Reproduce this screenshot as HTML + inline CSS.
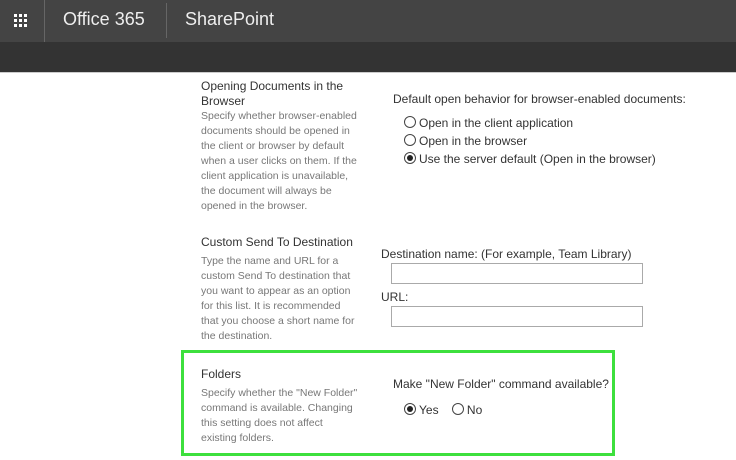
<!DOCTYPE html><html><head><style>
body{margin:0;width:736px;height:460px;overflow:hidden;background:#fff;font-family:"Liberation Sans",sans-serif;position:relative}
.a{position:absolute;white-space:nowrap}
.t{font-size:12px;color:#333}
.d{font-size:10.5px;color:#777;line-height:15px}
.r{font-size:12px;color:#333}
.rad{display:inline-block;width:10px;height:10px;border:1px solid #444;border-radius:50%;vertical-align:-1px;margin-right:3px;position:relative}
.on::after{content:"";position:absolute;left:2px;top:2px;width:6px;height:6px;border-radius:50%;background:#222}
.in{position:absolute;border:1px solid #aaa;height:19px;width:250px;background:#fff}
</style></head><body>
<div class="a" style="left:0;top:0;width:736px;height:42px;background:#444"></div>
<div class="a" style="left:0;top:42px;width:736px;height:30px;background:#333"></div>
<div class="a" style="left:0;top:72px;width:736px;height:1px;background:#ccc"></div>
<svg class="a" style="left:14px;top:14px" width="16" height="14"><g fill="#fff"><rect x="0" y="0" width="3" height="3"/><rect x="5" y="0" width="3" height="3"/><rect x="10" y="0" width="3" height="3"/><rect x="0" y="5" width="3" height="3"/><rect x="5" y="5" width="3" height="3"/><rect x="10" y="5" width="3" height="3"/><rect x="0" y="10" width="3" height="3"/><rect x="5" y="10" width="3" height="3"/><rect x="10" y="10" width="3" height="3"/></g></svg>
<div class="a" style="left:44px;top:0;width:1px;height:42px;background:#666"></div>
<div class="a" style="left:63px;top:9px;font-size:18px;color:#eee">Office 365</div>
<div class="a" style="left:166px;top:3px;width:1px;height:35px;background:#666"></div>
<div class="a" style="left:185px;top:9px;font-size:18px;color:#eee">SharePoint</div>

<div class="a t" style="left:201px;top:79px;line-height:15px">Opening Documents in the<br>Browser</div>
<div class="a d" style="left:201px;top:109px">Specify whether browser-enabled<br>documents should be opened in<br>the client or browser by default<br>when a user clicks on them. If the<br>client application is unavailable,<br>the document will always be<br>opened in the browser.</div>
<div class="a r" style="left:393px;top:92px">Default open behavior for browser-enabled documents:</div>
<div class="a r" style="left:404px;top:116px"><span class="rad"></span>Open in the client application</div>
<div class="a r" style="left:404px;top:134px"><span class="rad"></span>Open in the browser</div>
<div class="a r" style="left:404px;top:152px"><span class="rad on"></span>Use the server default (Open in the browser)</div>

<div class="a t" style="left:201px;top:235px">Custom Send To Destination</div>
<div class="a d" style="left:201px;top:254px">Type the name and URL for a<br>custom Send To destination that<br>you want to appear as an option<br>for this list. It is recommended<br>that you choose a short name for<br>the destination.</div>
<div class="a r" style="left:381px;top:247px">Destination name: (For example, Team Library)</div>
<div class="in" style="left:391px;top:263px"></div>
<div class="a r" style="left:381px;top:290px">URL:</div>
<div class="in" style="left:391px;top:306px"></div>

<div class="a" style="left:181px;top:350px;width:428px;height:100px;border:3px solid #3de03d"></div>
<div class="a t" style="left:201px;top:367px">Folders</div>
<div class="a d" style="left:201px;top:386px;line-height:15px">Specify whether the "New Folder"<br>command is available. Changing<br>this setting does not affect<br>existing folders.</div>
<div class="a r" style="left:393px;top:377px">Make "New Folder" command available?</div>
<div class="a r" style="left:404px;top:403px"><span class="rad on"></span>Yes &nbsp;&nbsp;&nbsp;<span class="rad"></span>No</div>
</body></html>
